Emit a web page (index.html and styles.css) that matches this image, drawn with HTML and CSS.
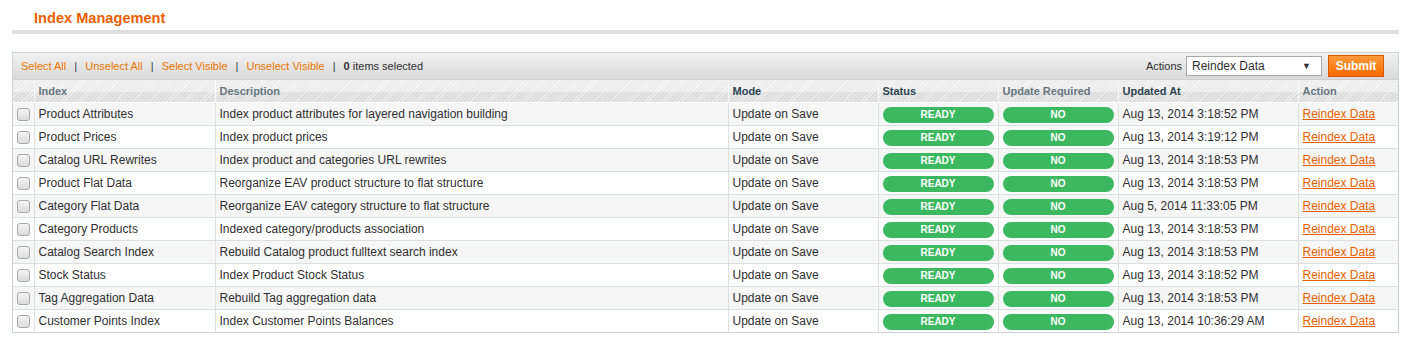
FILE: index.html
```html
<!DOCTYPE html>
<html lang="en">
<head>
  <meta charset="UTF-8" />
  <title>Index Management</title>
  <link rel="stylesheet" href="styles.css">
</head>
<body>
  <div class="content-header">
    <h3>Index Management</h3>
  </div>

  <div class="grid">
    <div class="massaction">
      <div class="mass-links">
        <a href="#">Select All</a> <span class="sep">|</span>
        <a href="#">Unselect All</a> <span class="sep">|</span>
        <a href="#">Select Visible</a> <span class="sep">|</span>
        <a href="#">Unselect Visible</a> <span class="sep">|</span>
        <span class="count"><strong>0</strong> items selected</span>
      </div>
      <div class="mass-form">
        <label for="action">Actions</label>
        <div class="select">Reindex Data<span class="arrow">▼</span></div>
        <button type="button">Submit</button>
      </div>
    </div>

    <table>
      <colgroup>
        <col style="width:21px">
        <col style="width:181px">
        <col style="width:513px">
        <col style="width:150px">
        <col style="width:120px">
        <col style="width:120px">
        <col style="width:180px">
        <col>
      </colgroup>
      <thead>
        <tr>
          <th></th>
          <th class="muted">Index</th>
          <th class="muted">Description</th>
          <th>Mode</th>
          <th>Status</th>
          <th class="muted">Update Required</th>
          <th>Updated At</th>
          <th class="muted">Action</th>
        </tr>
      </thead>
      <tbody id="rows"></tbody>
    </table>
  </div>

  <script>
    const rows = [
      ['Product Attributes', 'Index product attributes for layered navigation building', 'Aug 13, 2014 3:18:52 PM'],
      ['Product Prices', 'Index product prices', 'Aug 13, 2014 3:19:12 PM'],
      ['Catalog URL Rewrites', 'Index product and categories URL rewrites', 'Aug 13, 2014 3:18:53 PM'],
      ['Product Flat Data', 'Reorganize EAV product structure to flat structure', 'Aug 13, 2014 3:18:53 PM'],
      ['Category Flat Data', 'Reorganize EAV category structure to flat structure', 'Aug 5, 2014 11:33:05 PM'],
      ['Category Products', 'Indexed category/products association', 'Aug 13, 2014 3:18:53 PM'],
      ['Catalog Search Index', 'Rebuild Catalog product fulltext search index', 'Aug 13, 2014 3:18:53 PM'],
      ['Stock Status', 'Index Product Stock Status', 'Aug 13, 2014 3:18:52 PM'],
      ['Tag Aggregation Data', 'Rebuild Tag aggregation data', 'Aug 13, 2014 3:18:53 PM'],
      ['Customer Points Index', 'Index Customer Points Balances', 'Aug 13, 2014 10:36:29 AM']
    ];

    document.getElementById('rows').innerHTML = rows.map(r => `
      <tr>
        <td class="check"><input type="checkbox"></td>
        <td>${r[0]}</td>
        <td>${r[1]}</td>
        <td>Update on Save</td>
        <td><span class="badge">READY</span></td>
        <td><span class="badge">NO</span></td>
        <td>${r[2]}</td>
        <td><a href="#" class="reindex">Reindex Data</a></td>
      </tr>`).join('');
  </script>
</body>
</html>
```

FILE: styles.css
```css
:root {
  --orange: #eb5e00;
  --link: #ea7601;
  --text: #2f2f2f;
  --head: #2d444f;
  --muted: #67767e;
  --line: #dadfe0;
  --green: #3cb861;
}

body {
  margin: 0;
  padding: 0 4px 0 12px;
  font-family: "Liberation Sans", Arial, sans-serif;
  color: var(--text);
  background: #fff;
}

.content-header {
  border-bottom: 4px solid #dfdfdf;
  height: 30px;
  margin-bottom: 18px;
}

.content-header h3 {
  margin: 0;
  padding: 9px 0 0 22px;
  font-size: 14.6px;
  line-height: 18px;
  color: var(--orange);
}

.grid {
  border: 1px solid #cbd3d4;
}

.massaction {
  display: flex;
  justify-content: space-between;
  align-items: center;
  height: 26px;
  padding: 0 14px 0 8px;
  background: linear-gradient(#f2f2f2, #d9d9d9);
  border-bottom: 1px solid #cfcfcf;
  font-size: 11px;
}

.mass-links a {
  color: var(--link);
  text-decoration: none;
}

.mass-links .sep {
  color: #2d444f;
  margin: 0 5px;
}

.mass-links .count {
  color: var(--text);
}

.mass-form {
  display: flex;
  align-items: center;
  gap: 4px;
}

.mass-form label {
  color: var(--text);
}

.select {
  position: relative;
  width: 129px;
  height: 18px;
  padding-left: 5px;
  line-height: 19px;
  font-size: 12px;
  background: #fff;
  border: 1px solid #aaa;
}

.select .arrow {
  position: absolute;
  right: 10px;
  top: 0;
  font-size: 9px;
}

.mass-form button {
  margin-left: 2px;
  width: 56px;
  height: 22px;
  padding: 0;
  font-family: inherit;
  font-size: 12px;
  font-weight: bold;
  color: #fff;
  background: linear-gradient(#ff9a3a, #f56a00);
  border: 1px solid #d95b00;
  cursor: pointer;
}

table {
  width: 100%;
  border-collapse: collapse;
  table-layout: fixed;
}

th {
  height: 22px;
  padding: 0 4px;
  text-align: left;
  font-size: 11px;
  color: var(--head);
  border-left: 1px solid #fafafa;
  border-bottom: 1px solid #ffffff;
  background:
    repeating-linear-gradient(135deg, rgba(255,255,255,0.55) 0 1px, transparent 1px 3px),
    linear-gradient(#ececec 0 12px, #dcdcdc 12px);
}

th:first-child {
  border-left: none;
}

th.muted {
  color: var(--muted);
}

td {
  height: 22px;
  padding: 0 4px;
  font-size: 12px;
  color: var(--text);
  border-left: 1px solid var(--line);
  border-bottom: 1px solid var(--line);
  white-space: nowrap;
}

td:first-child {
  border-left: none;
}

tbody tr:nth-child(odd) td {
  background: #f6f6f6;
}

tbody tr:last-child td {
  border-bottom: none;
}

td.check {
  padding: 0 0 0 4px;
}

td.check input {
  appearance: none;
  display: block;
  width: 13px;
  height: 13px;
  margin: 0;
  border: 1px solid #a9a9a9;
  border-radius: 3px;
  background: linear-gradient(#f4f4f4, #dcdcdc);
}

.badge {
  display: block;
  height: 16px;
  margin-top: 1px;
  line-height: 16px;
  border-radius: 8px;
  background: var(--green);
  color: #fff;
  font-size: 10px;
  font-weight: bold;
  text-align: center;
}

.reindex {
  color: var(--orange);
  text-decoration: underline;
}
```
